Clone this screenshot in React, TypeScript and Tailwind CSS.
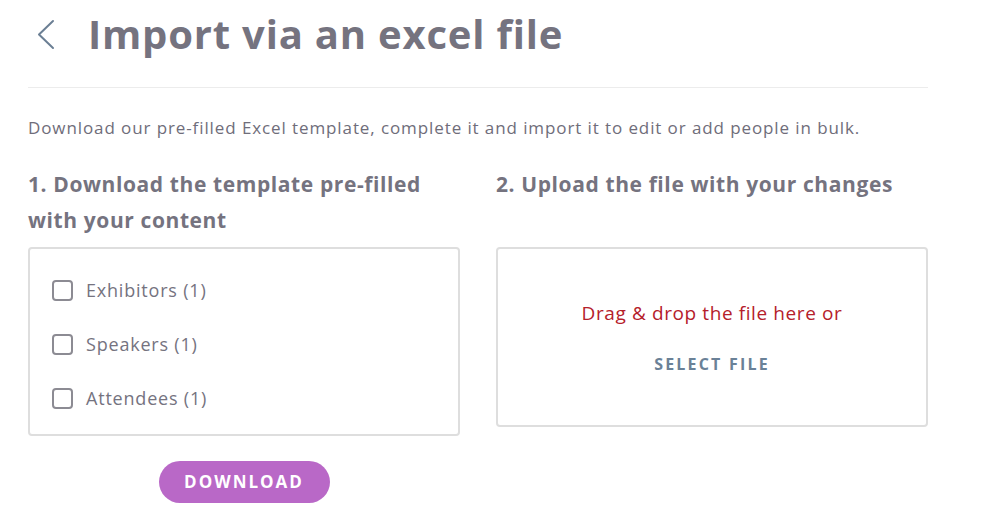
const items = ["Exhibitors (1)", "Speakers (1)", "Attendees (1)"]

function BackArrow() {
  return (
    <svg width="18" height="31" viewBox="0 0 18 31" fill="none">
      <polyline
        points="16,2 2,15.5 16,29"
        stroke="#6b7f94"
        strokeWidth="2"
        strokeLinecap="round"
        strokeLinejoin="round"
      />
    </svg>
  )
}

export default function App() {
  return (
    <div className="min-h-screen w-full bg-white font-['Open_Sans',sans-serif]">
      <div className="w-[900px] ml-[28px]">
        {/* Header */}
        <div className="flex items-center h-[88px] border-b border-[#ececec]">
          <button className="ml-[9px] mr-[33px] mt-[-19px]">
            <BackArrow />
          </button>
          <h1 className="mt-[-20px] text-[40px] font-bold tracking-[0.8px] text-[#75737f]">
            Import via an excel file
          </h1>
        </div>

        <p className="mt-[28px] text-[17px] tracking-[0.9px] text-[#6f6d7a] leading-[24px]">
          Download our pre-filled Excel template, complete it and import it to edit or add people in bulk.
        </p>

        <div className="mt-[26px] grid grid-cols-2 gap-[36px]">
          {/* Left column */}
          <div className="flex flex-col">
            <h2 className="text-[21px] font-bold leading-[36px] tracking-[0.6px] text-[#75737f]">
              1. Download the template pre-filled with your content
            </h2>
            <div className="mt-[9px] h-[189px] rounded-[4px] border-2 border-[#dedede] px-[22px] pt-[30px] flex flex-col gap-[32px]">
              {items.map((label) => (
                <label key={label} className="flex items-center gap-[13px] h-[22px]">
                  <span className="w-[21px] h-[21px] rounded-[4px] border-2 border-[#8c8b93] bg-white" />
                  <span className="text-[18px] tracking-[0.8px] text-[#75737f]">{label}</span>
                </label>
              ))}
            </div>
            <div className="flex justify-center mt-[25px]">
              <button className="w-[171px] h-[42px] rounded-full bg-[#b968c7] text-white font-bold text-[17px] tracking-[2px] uppercase">
                Download
              </button>
            </div>
          </div>

          {/* Right column */}
          <div className="flex flex-col">
            <h2 className="text-[21px] font-bold leading-[36px] tracking-[0.6px] text-[#75737f]">
              2. Upload the file with your changes
            </h2>
            <div className="mt-[45px] h-[180px] rounded-[4px] border-2 border-[#dedede] flex flex-col items-center pt-[51px]">
              <p className="text-[19px] tracking-[0.6px] text-[#b5202a] leading-[26px]">Drag &amp; drop the file here or</p>
              <button className="mt-[26px] text-[16px] font-bold tracking-[2.2px] text-[#6a8197] uppercase">
                Select file
              </button>
            </div>
          </div>
        </div>
      </div>
    </div>
  )
}
